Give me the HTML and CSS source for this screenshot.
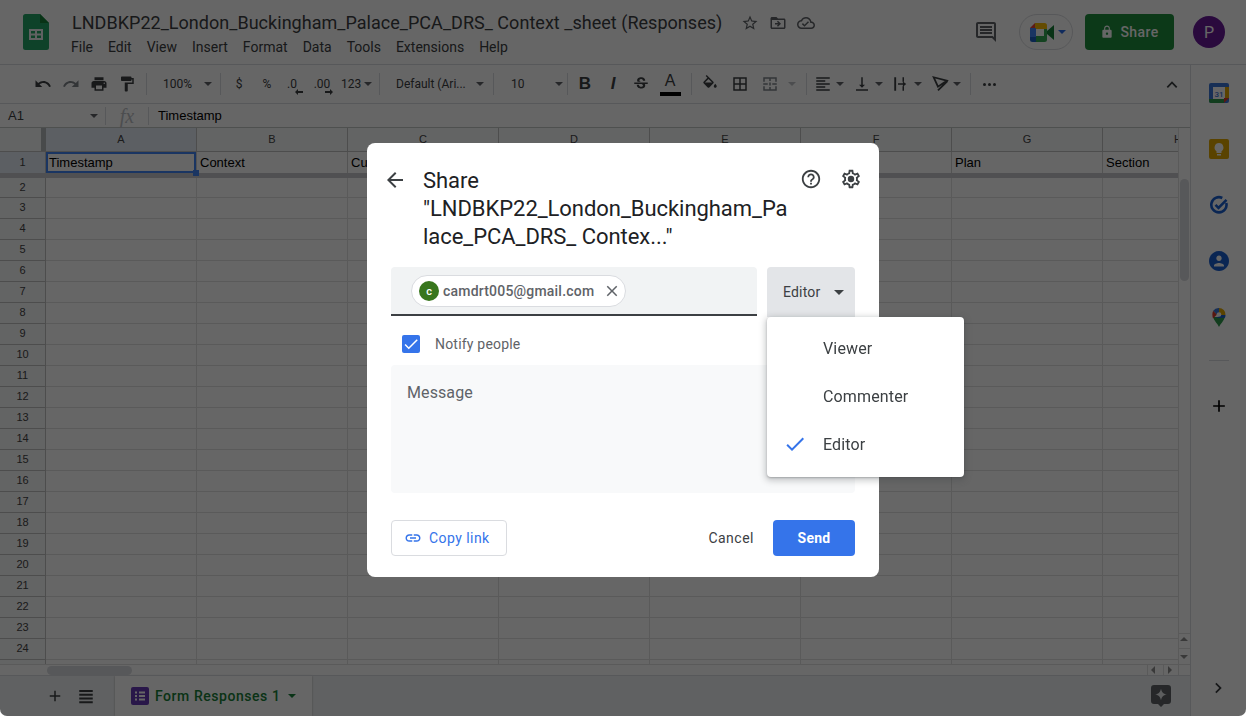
FILE: index.html
```html
<!DOCTYPE html>
<html lang="en">
<head>
    <meta charset="UTF-8">
    <title>Share sheet</title>
    <link rel="stylesheet" href="styles.css">
</head>
<body>
<div class="app">

    <header class="topbar">
        <svg class="logo" viewBox="0 0 26 36"><path fill="#23a566" d="M2.500 0H17l9 9v24.500a2.500 2.500 0 0 1-2.500 2.500h-21A2.500 2.500 0 0 1 0 33.500V2.500A2.500 2.500 0 0 1 2.500 0z"/><path fill="#188038" d="M17 0l9 9h-9z"/><path fill="#f1f3f4" d="M6 15h14v11H6zm2 2v2.500h4V17zm6 0v2.500h4V17zM8 21.500V24h4v-2.500zm6 0V24h4v-2.500z" fill-rule="evenodd"/></svg>
        <div class="doc">
            <div class="doc-title">
                <span class="doc-name">LNDBKP22_London_Buckingham_Palace_PCA_DRS_ Context _sheet (Responses)</span>
                <svg class="doc-icon" viewBox="0 0 24 24"><path d="M22 9.240l-7.190-.62L12 2 9.190 8.630 2 9.240l5.460 4.730L5.820 21 12 17.270 18.180 21l-1.630-7.030L22 9.240zM12 15.400l-3.760 2.270 1-4.280-3.320-2.880 4.380-.38L12 6.100l1.710 4.040 4.380.38-3.320 2.880 1 4.280L12 15.400z"/></svg>
                <svg class="doc-icon" viewBox="0 0 24 24"><path d="M20 6h-8l-2-2H4c-1.100 0-1.990.9-1.990 2L2 18c0 1.100.9 2 2 2h16c1.100 0 2-.9 2-2V8c0-1.100-.9-2-2-2zm0 12H4V8h16v10zm-8.010-9l-1.410 1.410L12.160 12H8v2h4.160l-1.590 1.590L11.990 17 16 13.010 11.990 9z"/></svg>
                <svg class="doc-icon" viewBox="0 0 24 24"><path d="M19.350 10.040C18.670 6.590 15.640 4 12 4 9.110 4 6.600 5.640 5.350 8.040 2.340 8.360 0 10.910 0 14c0 3.310 2.690 6 6 6h13c2.760 0 5-2.240 5-5 0-2.640-2.050-4.780-4.650-4.960zM19 18H6c-2.210 0-4-1.790-4-4 0-2.050 1.530-3.760 3.560-3.970l1.070-.11.5-.95C8.080 7.140 9.940 6 12 6c2.620 0 4.880 1.860 5.390 4.430l.3 1.500 1.530.11c1.560.1 2.780 1.410 2.780 2.960 0 1.650-1.350 3-3 3zm-9-3.820l-2.090-2.090L6.500 13.500 10 17l6.010-6.010-1.410-1.410z"/></svg>
            </div>
            <nav class="menubar">
                <span>File</span><span>Edit</span><span>View</span><span>Insert</span><span>Format</span><span>Data</span><span>Tools</span><span>Extensions</span><span>Help</span>
            </nav>
        </div>
        <div class="top-actions">
            <svg class="comment-icon" viewBox="0 0 24 24"><path d="M21.990 4c0-1.100-.89-2-1.990-2H4c-1.100 0-2 .9-2 2v12c0 1.100.9 2 2 2h14l4 4-.01-18zM20 4v13.170L18.830 16H4V4h16zM6 12h12v2H6zm0-3h12v2H6zm0-3h12v2H6z"/></svg>
            <div class="meet">
                <svg class="meet-logo" viewBox="0 0 24 19"><path fill="#ea4335" d="M0 5l5-5v5z"/><path fill="#fbbc04" d="M5 0h9.500A2.500 2.500 0 0 1 17 2.500V6H5z"/><path fill="#4285f4" d="M0 5h6v9H0z"/><path fill="#1a5fc4" d="M0 14h6v5H2.500A2.500 2.500 0 0 1 0 16.500z"/><path fill="#34a853" d="M6 13h8V6h3v10.500a2.500 2.500 0 0 1-2.500 2.500H6z"/><path fill="#188038" d="M17 8l7-6v15l-7-6z"/></svg>
                <span class="caret caret-blue"></span>
            </div>
            <button class="share-btn">
                <svg viewBox="0 0 24 24"><path d="M18 8h-1V6c0-2.760-2.240-5-5-5S7 3.240 7 6v2H6c-1.100 0-2 .9-2 2v10c0 1.100.9 2 2 2h12c1.100 0 2-.9 2-2V10c0-1.100-.9-2-2-2zm-6 9c-1.100 0-2-.9-2-2s.9-2 2-2 2 .9 2 2-.9 2-2 2zM9 8V6c0-1.660 1.340-3 3-3s3 1.340 3 3v2H9z"/></svg>
                Share
            </button>
            <div class="avatar">P</div>
        </div>
    </header>

    <div class="workspace">
        <main class="sheet">
            <div class="toolbar">
                <div class="tgroup g-history">
                    <svg class="tool" viewBox="0 0 24 24"><path d="M12.500 8c-2.650 0-5.050.99-6.900 2.600L2 7v9h9l-3.620-3.620c1.390-1.160 3.160-1.880 5.120-1.880 3.540 0 6.550 2.310 7.600 5.500l2.370-.78C21.080 11.030 17.150 8 12.500 8z"/></svg>
                    <svg class="tool tool-soft" viewBox="0 0 24 24"><path d="M18.400 10.600C16.550 8.990 14.150 8 11.500 8c-4.650 0-8.580 3.030-9.960 7.220L3.900 16c1.050-3.190 4.050-5.500 7.600-5.500 1.950 0 3.730.72 5.120 1.880L13 16h9V7l-3.600 3.600z"/></svg>
                    <svg class="tool" viewBox="0 0 24 24"><path d="M19 8H5c-1.660 0-3 1.340-3 3v6h4v4h12v-4h4v-6c0-1.660-1.340-3-3-3zm-3 11H8v-5h8v5zm3-7c-.55 0-1-.45-1-1s.45-1 1-1 1 .45 1 1-.45 1-1 1zm-1-9H6v4h12V3z"/></svg>
                    <svg class="tool" viewBox="0 0 24 24"><path d="M18 4V3c0-.55-.45-1-1-1H5c-.55 0-1 .45-1 1v4c0 .55.45 1 1 1h12c.55 0 1-.45 1-1V6h1v4H9v11c0 .55.45 1 1 1h2c.55 0 1-.45 1-1v-9h8V4h-3z"/></svg>
                </div>
                <div class="tgroup g-zoom"><span class="tlabel">100%</span><span class="caret"></span></div>
                <div class="tgroup g-number">
                    <span class="tnum">$</span>
                    <span class="tnum">%</span>
                    <span class="tnum tnum-less">.0<svg class="dec-arrow" viewBox="0 0 8 6"><path d="M3 0v2h5v2H3v2L0 3z"/></svg></span>
                    <span class="tnum tnum-plus">.00<svg class="dec-arrow" viewBox="0 0 8 6"><path d="M5 0v2H0v2h5v2l3-3z"/></svg></span>
                    <span class="tnum tnum-more">123<span class="caret"></span></span>
                </div>
                <div class="tgroup g-font"><span class="tlabel">Default (Ari...</span><span class="caret"></span></div>
                <div class="tgroup g-size"><span class="tlabel">10</span><span class="caret"></span></div>
                <div class="tgroup g-format">
                    <span class="tfmt tfmt-b">B</span>
                    <span class="tfmt tfmt-i">I</span>
                    <svg class="tool" viewBox="0 0 24 24"><path d="M7.240 8.750c-.26-.48-.39-1.030-.39-1.670 0-.61.13-1.160.4-1.670.26-.5.63-.93 1.110-1.290.48-.35 1.050-.63 1.700-.83.66-.19 1.390-.29 2.180-.29.81 0 1.540.11 2.210.34.66.22 1.230.54 1.690.94.47.4.83.88 1.080 1.430.25.55.38 1.150.38 1.810h-3.010c0-.31-.05-.59-.15-.85-.09-.27-.24-.49-.44-.68-.2-.19-.45-.33-.75-.44-.3-.1-.66-.16-1.060-.16-.39 0-.74.04-1.030.13-.29.09-.53.21-.72.36-.19.16-.34.34-.44.55-.1.21-.15.43-.15.66 0 .48.25.88.74 1.210.38.25.77.48 1.410.7H7.390c-.05-.08-.11-.17-.15-.25zM21 12v-2H3v2h9.620c.18.07.4.14.55.2.37.17.66.34.87.51.21.17.35.36.43.57.07.2.11.43.11.69 0 .23-.05.45-.14.66-.09.2-.23.38-.42.53-.19.15-.42.26-.71.35-.29.08-.63.13-1.010.13-.43 0-.83-.04-1.180-.13s-.66-.23-.91-.42c-.25-.19-.45-.44-.59-.75-.14-.31-.25-.76-.25-1.210H6.400c0 .55.08 1.130.24 1.580.16.45.37.85.65 1.210.28.35.6.66.98.92.37.26.78.48 1.220.65.44.17.9.3 1.380.39.48.08.96.13 1.440.13.8 0 1.530-.09 2.180-.28s1.210-.45 1.670-.79c.46-.34.82-.77 1.070-1.270s.38-1.070.38-1.710c0-.6-.1-1.140-.31-1.610-.05-.11-.11-.23-.17-.33H21z"/></svg>
                    <span class="tfmt tfmt-a">A</span>
                </div>
                <div class="tgroup g-cells">
                    <svg class="tool" viewBox="0 0 24 24"><path d="M16.560 8.940L7.620 0 6.210 1.410l2.380 2.380-5.150 5.150c-.59.59-.59 1.540 0 2.120l5.500 5.500c.29.29.68.44 1.060.44s.77-.15 1.060-.44l5.500-5.500c.59-.58.59-1.530 0-2.120zM5.210 10L10 5.210 14.790 10H5.210zM19 11.500s-2 2.170-2 3.500c0 1.100.9 2 2 2s2-.9 2-2c0-1.330-2-3.500-2-3.500z"/></svg>
                    <svg class="tool" viewBox="0 0 24 24"><path d="M3 3v18h18V3H3zm8 16H5v-6h6v6zm0-8H5V5h6v6zm8 8h-6v-6h6v6zm0-8h-6V5h6v6z"/></svg>
                    <svg class="tool tool-soft" viewBox="0 0 24 24"><path d="M3 3h18v2H3zM3 19h18v2H3zM3 5h2v4H3zM19 5h2v4h-2zM3 15h2v4H3zM19 15h2v4h-2zM3 11h6v2H3zM15 11h6v2h-6zM11 5h2v3h-2zM11 16h2v3h-2zM11 10h2v4h-2z"/></svg>
                    <span class="caret caret-soft"></span>
                </div>
                <div class="tgroup g-align">
                    <svg class="tool" viewBox="0 0 24 24"><path d="M15 15H3v2h12v-2zm0-8H3v2h12V7zM3 13h18v-2H3v2zm0 8h18v-2H3v2zM3 3v2h18V3H3z"/></svg><span class="caret"></span>
                    <svg class="tool" viewBox="0 0 24 24"><path d="M16 13h-3V3h-2v10H8l4 4 4-4zM4 19v2h16v-2H4z"/></svg><span class="caret"></span>
                    <svg class="tool" viewBox="0 0 24 24"><path d="M3 3h2.500v18H3zM14 3h2v6h-2zM14 15h2v6h-2zM8 11h6.500V8.500L19 12l-4.500 3.500V13H8z"/></svg><span class="caret"></span>
                    <svg class="tool tool-line" viewBox="0 0 24 24"><path d="M3.600 3L21 7.600 9.300 15.600zM9.300 20.500L22 8"/></svg><span class="caret"></span>
                </div>
                <div class="more-dots"><i></i><i></i><i></i></div>
                <svg class="collapse" viewBox="0 0 24 24"><path d="M12 8l-8 8 1.900 1.900L12 11.800l6.100 6.100L20 16z"/></svg>
            </div>

            <div class="formula">
                <span class="name-box">A1</span>
                <span class="caret"></span>
                <span class="fx">fx</span>
                <span class="formula-text">Timestamp</span>
            </div>

            <div class="grid">
                <div class="row row-head">
                    <div class="corner"></div>
                    <div class="cell col-label col-active">A</div>
                    <div class="cell col-label">B</div>
                    <div class="cell col-label">C</div>
                    <div class="cell col-label">D</div>
                    <div class="cell col-label">E</div>
                    <div class="cell col-label">F</div>
                    <div class="cell col-label">G</div>
                    <div class="cell col-label col-cut">H</div>
                </div>
                <div class="row row-first">
                    <div class="num num-active">1</div>
                    <div class="cell cell-selected">Timestamp<span class="fill-handle"></span></div>
                    <div class="cell">Context</div>
                    <div class="cell">Current</div>
                    <div class="cell"></div>
                    <div class="cell"></div>
                    <div class="cell"></div>
                    <div class="cell">Plan</div>
                    <div class="cell cell-last">Section</div>
                </div>
                <div class="freeze"></div>
                <div class="body">
                    <div class="row row-plain"><div class="num">2</div></div>
                    <div class="row row-plain"><div class="num">3</div></div>
                    <div class="row row-plain"><div class="num">4</div></div>
                    <div class="row row-plain"><div class="num">5</div></div>
                    <div class="row row-plain"><div class="num">6</div></div>
                    <div class="row row-plain"><div class="num">7</div></div>
                    <div class="row row-plain"><div class="num">8</div></div>
                    <div class="row row-plain"><div class="num">9</div></div>
                    <div class="row row-plain"><div class="num">10</div></div>
                    <div class="row row-plain"><div class="num">11</div></div>
                    <div class="row row-plain"><div class="num">12</div></div>
                    <div class="row row-plain"><div class="num">13</div></div>
                    <div class="row row-plain"><div class="num">14</div></div>
                    <div class="row row-plain"><div class="num">15</div></div>
                    <div class="row row-plain"><div class="num">16</div></div>
                    <div class="row row-plain"><div class="num">17</div></div>
                    <div class="row row-plain"><div class="num">18</div></div>
                    <div class="row row-plain"><div class="num">19</div></div>
                    <div class="row row-plain"><div class="num">20</div></div>
                    <div class="row row-plain"><div class="num">21</div></div>
                    <div class="row row-plain"><div class="num">22</div></div>
                    <div class="row row-plain"><div class="num">23</div></div>
                    <div class="row row-plain"><div class="num">24</div></div>
                    <div class="row-tail"><div class="num"></div></div>
                </div>
                <div class="vscroll">
                    <div class="vthumb"></div>
                    <div class="varrows"><span class="tri tri-up"></span><span class="tri tri-down"></span></div>
                </div>
                <div class="hscroll">
                    <div class="hthumb"></div>
                    <div class="harrows"><span class="tri tri-left"></span><span class="tri tri-right"></span><span class="hcorner"></span></div>
                </div>
            </div>

            <footer class="tabs">
                <svg class="tabs-icon" viewBox="0 0 24 24"><path d="M19 13h-6v6h-2v-6H5v-2h6V5h2v6h6z"/></svg>
                <svg class="tabs-icon" viewBox="0 0 24 24"><path d="M3 4h18v2.500H3zM3 9h18v2.500H3zM3 14h18v2.500H3zM3 19h18v2.500H3z"/></svg>
                <div class="tab">
                    <svg class="form-icon" viewBox="0 0 18 18"><rect width="18" height="18" rx="2" fill="#673ab7"/><path fill="#fff" d="M4 4.500h2v2H4zM8 4.500h6v2H8zM4 8h2v2H4zM8 8h6v2H8zM4 11.500h2v2H4zM8 11.500h6v2H8z"/></svg>
                    <span class="tab-name">Form Responses 1</span>
                    <span class="caret caret-green"></span>
                </div>
                <div class="explore">
                    <svg viewBox="0 0 20 22"><path fill="#5f6368" d="M3 0h14a3 3 0 0 1 3 3v13a3 3 0 0 1-3 3h-4l-3 3-3-3H3a3 3 0 0 1-3-3V3a3 3 0 0 1 3-3z"/><path fill="#e8eaed" d="M10 3.500c.6 3.400 2 5.200 5.800 6-3.800.8-5.200 2.600-5.800 6-.6-3.400-2-5.200-5.800-6 3.800-.8 5.200-2.600 5.800-6z"/></svg>
                </div>
            </footer>
        </main>

        <aside class="sidepanel">
            <svg class="side-icon" viewBox="0 0 20 20"><rect width="20" height="20" rx="2" fill="#3a75d8"/><rect x="4" y="4" width="12" height="12" fill="#fff"/><path fill="#e0a800" d="M16 4h4v11h-4z"/><path fill="#2e9a4c" d="M0 16h15v4H2a2 2 0 0 1-2-2z"/><path fill="#d93a2c" d="M15 15h5l-5 5z"/><text class="cal-day" x="10" y="13.500">31</text></svg>
            <svg class="side-icon" viewBox="0 0 20 20"><rect width="20" height="20" rx="2" fill="#e0a800"/><path fill="#fff" d="M10 4a4.500 4.500 0 0 0-2.500 8.200V14h5v-1.800A4.500 4.500 0 0 0 10 4zM8 15h4v1.500H8z"/></svg>
            <svg class="side-icon" viewBox="0 0 20 20"><path fill="none" stroke="#1a5fd0" stroke-width="2.600" d="M17.300 8a7.600 7.600 0 1 1-4-5"/><path fill="none" stroke="#1a5fd0" stroke-width="2.600" d="M6.500 9.800l3 3 8-8"/></svg>
            <svg class="side-icon" viewBox="2 2 20 20"><path fill="#1a5fd0" d="M12 2C6.480 2 2 6.480 2 12s4.480 10 10 10 10-4.480 10-10S17.520 2 12 2z"/><path fill="#fff" d="M12 6.500c1.500 0 2.700 1.200 2.700 2.700s-1.200 2.700-2.700 2.700-2.700-1.200-2.700-2.700 1.200-2.700 2.700-2.700zm0 7.500c2 0 5 1 5 2.500v1H7v-1c0-1.500 3-2.500 5-2.500z"/></svg>
            <svg class="side-icon" viewBox="0 0 20 20"><path fill="#2e9a4c" d="M10 20c-1-3-5-6-6-10h12c-1 4-5 7-6 10z"/><path fill="#d93a2c" d="M4.200 3.800L8 7.500 4 11.500C3.200 9 3 6 4.200 3.800z"/><path fill="#3a75d8" d="M4.200 3.800A6.500 6.500 0 0 1 10 1v4.500L8 7.500z"/><path fill="#e0a800" d="M10 1a6.500 6.500 0 0 1 6.500 7L12 8.500l-2-3z"/><path fill="#1a5fd0" d="M16.500 8c0 1-.2 1.800-.6 2.700L7 11l5-3z"/><circle cx="10" cy="7.500" r="2.300" fill="#fff"/></svg>
            <div class="side-rule"></div>
            <svg class="side-plus" viewBox="0 0 24 24"><path d="M19 13h-6v6h-2v-6H5v-2h6V5h2v6h6z"/></svg>
            <svg class="side-expand" viewBox="0 0 24 24"><path d="M8.600 5L7 6.800 12.300 12 7 17.200 8.600 19l7-7z"/></svg>
        </aside>
    </div>
</div>

<div class="scrim"></div>

<div class="dialog">
    <div class="dialog-head">
        <svg class="back" viewBox="0 0 24 24"><path d="M20 11H7.830l5.590-5.590L12 4l-8 8 8 8 1.410-1.410L7.830 13H20v-2z"/></svg>
        <h2 class="dialog-title">Share<br>"LNDBKP22_London_Buckingham_Pa<br>lace_PCA_DRS_ Contex..."</h2>
        <div class="head-icons">
            <svg viewBox="0 0 24 24"><path d="M11 18h2v-2h-2v2zm1-16C6.480 2 2 6.480 2 12s4.480 10 10 10 10-4.480 10-10S17.520 2 12 2zm0 18c-4.410 0-8-3.590-8-8s3.590-8 8-8 8 3.590 8 8-3.590 8-8 8zm0-14c-2.210 0-4 1.790-4 4h2c0-1.100.9-2 2-2s2 .9 2 2c0 2-3 1.750-3 5h2c0-2.250 3-2.500 3-5 0-2.210-1.790-4-4-4z"/></svg>
            <svg viewBox="0 0 24 24"><path d="M19.430 12.980c.04-.32.07-.64.07-.98 0-.34-.03-.66-.07-.98l2.110-1.650c.19-.15.24-.42.12-.64l-2-3.460c-.09-.16-.26-.25-.44-.25-.06 0-.12.01-.17.03l-2.490 1c-.52-.4-1.080-.73-1.690-.98l-.38-2.650C14.460 2.180 14.250 2 14 2h-4c-.25 0-.46.18-.49.42l-.38 2.650c-.61.25-1.170.59-1.690.98l-2.490-1c-.06-.02-.12-.03-.18-.03-.17 0-.34.09-.43.25l-2 3.460c-.13.22-.07.49.12.64l2.110 1.650c-.04.32-.07.65-.07.98 0 .33.03.66.07.98l-2.110 1.650c-.19.15-.24.42-.12.64l2 3.460c.09.16.26.25.44.25.06 0 .12-.01.17-.03l2.490-1c.52.4 1.080.73 1.690.98l.38 2.650c.03.24.24.42.49.42h4c.25 0 .46-.18.49-.42l.38-2.650c.61-.25 1.170-.59 1.690-.98l2.490 1c.06.02.12.03.18.03.17 0 .34-.09.43-.25l2-3.460c.12-.22.07-.49-.12-.64l-2.110-1.650zm-1.980-1.710c.04.31.05.52.05.73 0 .21-.02.43-.05.73l-.14 1.130.89.7 1.080.84-.7 1.210-1.270-.51-1.040-.42-.9.68c-.43.32-.84.56-1.250.73l-1.060.43-.16 1.130-.2 1.350h-1.400l-.19-1.350-.16-1.130-1.060-.43c-.43-.18-.83-.41-1.230-.71l-.91-.7-1.060.43-1.270.51-.7-1.210 1.080-.84.89-.7-.14-1.130c-.03-.31-.05-.54-.05-.74s.02-.43.05-.73l.14-1.130-.89-.7-1.080-.84.7-1.210 1.270.51 1.040.42.9-.68c.43-.32.84-.56 1.250-.73l1.060-.43.16-1.130.2-1.350h1.390l.19 1.350.16 1.130 1.060.43c.43.18.83.41 1.230.71l.91.7 1.060-.43 1.270-.51.7 1.210-1.070.85-.89.7.14 1.130zM12 8.500a3.500 3.500 0 1 0 0 7 3.500 3.500 0 0 0 0-7z"/></svg>
        </div>
    </div>

    <div class="recipient-row">
        <div class="recipient">
            <div class="chip">
                <span class="chip-avatar">c</span>
                <span class="chip-text">camdrt005@gmail.com</span>
                <svg class="chip-close" viewBox="0 0 24 24"><path d="M19 6.410L17.590 5 12 10.590 6.410 5 5 6.410 10.590 12 5 17.590 6.410 19 12 13.410 17.590 19 19 17.590 13.410 12z"/></svg>
            </div>
        </div>
        <div class="role">Editor<span class="caret caret-dark"></span></div>
    </div>

    <div class="notify">
        <span class="checkbox">
            <svg viewBox="0 0 24 24"><path d="M9 16.170L4.830 12l-1.420 1.410L9 19 21 7l-1.410-1.410z"/></svg>
        </span>
        <span class="notify-label">Notify people</span>
    </div>

    <div class="message">Message</div>

    <div class="dialog-foot">
        <button class="copy-link">
            <svg viewBox="0 0 24 24"><path d="M3.900 12c0-1.710 1.390-3.100 3.100-3.100h4V7H7c-2.760 0-5 2.240-5 5s2.240 5 5 5h4v-1.900H7c-1.710 0-3.100-1.390-3.100-3.100zM8 13h8v-2H8v2zm9-6h-4v1.900h4c1.710 0 3.100 1.390 3.100 3.100s-1.390 3.100-3.100 3.100h-4V17h4c2.760 0 5-2.240 5-5s-2.240-5-5-5z"/></svg>
            Copy link
        </button>
        <button class="cancel">Cancel</button>
        <button class="send">Send</button>
    </div>
</div>

<div class="role-menu">
    <div class="role-item">Viewer</div>
    <div class="role-item">Commenter</div>
    <div class="role-item role-checked">
        <svg viewBox="0 0 24 24"><path d="M9 16.170L4.830 12l-1.420 1.410L9 19 21 7l-1.410-1.410z"/></svg>
        Editor
    </div>
</div>

</body>
</html>
```

FILE: styles.css
```css
* {
    box-sizing: border-box;
}
html, body {
    margin: 0;
    height: 716px;
    overflow: hidden;
    background: #fff;
}
body {
    font-family: Roboto, "Liberation Sans", sans-serif;
    color: #3c4043;
}
button {
    font-family: inherit;
    border: none;
    background: none;
    padding: 0;
}
.app {
    height: 716px;
    display: flex;
    flex-direction: column;
    background: #fff;
    border-radius: 0 0 7px 7px;
    overflow: hidden;
}

/* top bar */
.topbar {
    height: 65px;
    flex: none;
    display: flex;
    border-bottom: 1px solid #dadce0;
    padding-left: 23px;
}
.logo {
    width: 26px;
    height: 36px;
    margin-top: 14px;
    flex: none;
}
.doc {
    margin-left: 23px;
    padding-top: 11px;
}
.doc-title {
    display: flex;
    align-items: center;
    height: 23px;
}
.doc-name {
    font-size: 18px;
    letter-spacing: 0.03px;
    color: #3c4043;
    white-space: nowrap;
    width: 669px;
}
.doc-icon {
    width: 18px;
    height: 18px;
    fill: #5f6368;
    margin-right: 10px;
    flex: none;
}
.menubar {
    display: flex;
    gap: 15px;
    margin-top: 3px;
    font-size: 14px;
    line-height: 20px;
    margin-left: -1px;
}
.top-actions {
    margin-left: auto;
    display: flex;
    align-items: center;
    height: 64px;
    padding-right: 21px;
}
.comment-icon {
    width: 24px;
    height: 24px;
    fill: #5f6368;
}
.meet {
    width: 54px;
    height: 36px;
    margin-left: 21px;
    border: 1px solid #dadce0;
    border-radius: 18px;
    display: flex;
    align-items: center;
    padding-left: 10px;
    gap: 4px;
}
.meet-logo {
    width: 24px;
    height: 19px;
}
.share-btn {
    width: 89px;
    height: 36px;
    margin-left: 12px;
    border-radius: 4px;
    background: #1e8e3e;
    color: #fff;
    font-size: 14px;
    font-weight: 500;
    letter-spacing: 0.4px;
    display: flex;
    align-items: center;
    justify-content: center;
    gap: 6px;
}
.share-btn svg {
    width: 14px;
    height: 14px;
    fill: #fff;
}
.avatar {
    width: 32px;
    height: 32px;
    margin-left: 19px;
    border-radius: 50%;
    background: #6a1b9a;
    color: #fff;
    font-size: 16px;
    display: flex;
    align-items: center;
    justify-content: center;
}

/* carets */
.caret {
    display: inline-block;
    width: 0;
    height: 0;
    border-left: 4px solid transparent;
    border-right: 4px solid transparent;
    border-top: 4px solid #5f6368;
    flex: none;
}
.caret-blue {
    border-top-color: #2a6ce8;
}
.caret-soft {
    border-top-color: #bdc1c6;
}
.caret-green {
    border-top-color: #188038;
}
.caret-dark {
    border-left-width: 5px;
    border-right-width: 5px;
    border-top-width: 5px;
    border-top-color: #3c4043;
}

.workspace {
    flex: 1;
    min-height: 0;
    display: flex;
}
.sheet {
    width: 1190px;
    flex: none;
    display: flex;
    flex-direction: column;
}

/* toolbar */
.toolbar {
    height: 39px;
    flex: none;
    display: flex;
    align-items: center;
    border-bottom: 1px solid #dadce0;
    font-size: 12px;
    position: relative;
}
.tgroup {
    display: flex;
    align-items: center;
    height: 22px;
    flex: none;
    border-right: 1px solid #dadce0;
}
.g-history {
    width: 147px;
    padding-left: 34px;
    gap: 10px;
}
.g-zoom {
    width: 74px;
    padding-left: 16px;
}
.g-zoom .caret {
    margin-left: 12px;
}
.g-number {
    width: 159px;
}
.g-font {
    width: 114px;
    padding-left: 16px;
}
.g-font .caret {
    margin-left: 10px;
}
.g-size {
    width: 74px;
    padding-left: 17px;
}
.g-size .caret {
    margin-left: 30px;
}
.g-format {
    width: 124px;
    padding-left: 3px;
}
.g-cells {
    width: 115px;
    padding-left: 9px;
    gap: 12px;
}
.g-cells .caret {
    margin-left: -3px;
}
.g-align {
    width: 164px;
    padding-left: 7px;
}
.g-align .caret {
    margin: 0 9px 0 4px;
}
.tool {
    width: 18px;
    height: 18px;
    fill: #3c4043;
    flex: none;
}
.tool-soft {
    fill: #80868b;
}
.tool-line {
    fill: none;
    stroke: #3c4043;
    stroke-width: 2.4;
}
.g-format .tool {
    margin: 0 5px;
}
.tlabel {
    color: #3c4043;
    white-space: nowrap;
}
.tnum {
    width: 28px;
    text-align: center;
    font-size: 12px;
    position: relative;
    flex: none;
}
.tnum:first-child {
    margin-left: 4px;
}
.tnum-less {
    width: 22px;
}
.tnum-plus {
    width: 38px;
}
.tnum-more {
    width: 38px;
    display: flex;
    align-items: center;
    gap: 3px;
}
.dec-arrow {
    position: absolute;
    top: 12px;
    width: 8px;
    height: 6px;
    fill: #3c4043;
}
.tnum-less .dec-arrow {
    left: 14px;
}
.tnum-plus .dec-arrow {
    left: 22px;
}
.tfmt {
    width: 28px;
    text-align: center;
    font-size: 17px;
    flex: none;
    position: relative;
}
.tfmt-b {
    font-weight: 700;
    font-family: "Liberation Sans", sans-serif;
}
.tfmt-i {
    font-style: italic;
    font-family: "Liberation Sans", sans-serif;
    font-weight: 700;
}
.tfmt-a {
    font-size: 16px;
    margin-left: 1px;
    line-height: 16px;
    height: 24px;
    font-family: "Liberation Sans", sans-serif;
    padding-top: 1px;
}
.tfmt-a::after {
    content: "";
    position: absolute;
    left: 4px;
    right: 3px;
    bottom: 0;
    height: 4px;
    background: #000;
}
.more-dots {
    display: flex;
    gap: 2px;
    margin-left: 12px;
}
.more-dots i {
    width: 3px;
    height: 3px;
    border-radius: 50%;
    background: #3c4043;
}
.collapse {
    width: 16px;
    height: 16px;
    fill: #3c4043;
    margin-left: auto;
    margin-right: 10px;
}

/* formula bar */
.formula {
    height: 24px;
    flex: none;
    display: flex;
    align-items: center;
    border-bottom: 1px solid #c4c7c5;
    font-size: 13px;
    font-family: "Liberation Sans", sans-serif;
    color: #000;
    padding-left: 8px;
}
.name-box {
    width: 82px;
    color: #3c4043;
}
.fx {
    width: 44px;
    margin-left: 7px;
    border-left: 1px solid #dadce0;
    border-right: 1px solid #dadce0;
    height: 18px;
    line-height: 18px;
    text-align: center;
    font-family: "Liberation Serif", serif;
    font-style: italic;
    font-size: 20px;
    color: #bdc1c6;
}
.formula-text {
    margin-left: 9px;
}

/* grid */
.grid {
    flex: 1;
    min-height: 0;
    display: grid;
    grid-template-columns: 1178px 12px;
    grid-template-rows: 24px 21px 5px 1fr 12px;
    font-family: "Liberation Sans", sans-serif;
    position: relative;
}
.row {
    display: flex;
    grid-column: 1;
}
.row-head {
    background: #f8f9fa;
    border-bottom: 1px solid #c0c0c0;
    height: 24px;
}
.corner {
    width: 46px;
    flex: none;
    border-right: 5px solid #b5b8bb;
}
.cell {
    width: 151px;
    flex: none;
    border-right: 1px solid #d0d0d0;
    font-size: 13px;
    padding-left: 3px;
    line-height: 21px;
    color: #000;
    white-space: nowrap;
    overflow: hidden;
}
.col-label {
    font-size: 11px;
    line-height: 23px;
    color: #444;
    text-align: center;
    padding: 0;
    border-right-color: #c0c0c0;
}
.col-active {
    background: #e6eef8;
}
.col-cut {
    width: 75px;
    text-align: left;
    padding-left: 71px;
    border-right: none;
}
.row-first {
    height: 21px;
    position: relative;
}
.num {
    width: 46px;
    flex: none;
    background: #f8f9fa;
    border-right: 1px solid #c0c0c0;
    text-align: center;
    font-size: 11px;
    color: #444;
}
.num-active {
    background: #e6eef8;
    line-height: 21px;
}
.cell-selected {
    box-shadow: inset 0 0 0 2px #4285f4;
    overflow: visible;
    position: relative;
}
.cell-last {
    width: 75px;
    border-right: none;
}
.fill-handle {
    position: absolute;
    right: -3px;
    bottom: -3px;
    width: 6px;
    height: 6px;
    background: #4285f4;
}
.freeze {
    grid-column: 1;
    background: #c8c9cc;
}
.body {
    grid-column: 1;
    display: flex;
    flex-direction: column;
    background: repeating-linear-gradient(90deg, transparent 0, transparent 150px, #e0e0e0 150px, #e0e0e0 151px) 46px 0 no-repeat;
    overflow: hidden;
}
.row-plain {
    height: 21px;
    flex: none;
    border-bottom: 1px solid #e0e0e0;
}
.row-plain:first-child {
    height: 20px;
}
.row-plain .num {
    line-height: 19px;
    border-bottom: 1px solid #c0c0c0;
    margin-bottom: -1px;
}
.row-tail {
    flex: 1;
    display: flex;
}
.vscroll {
    grid-column: 2;
    grid-row: 1 / 5;
    border-left: 1px solid #e0e0e0;
    background: #fff;
    display: flex;
    flex-direction: column;
    position: relative;
}
.vthumb {
    width: 9px;
    height: 102px;
    margin: 51px 0 0 1px;
    border-radius: 5px;
    background: #dadce0;
}
.varrows {
    margin-top: auto;
    height: 31px;
    border-top: 1px solid #e0e0e0;
    background: linear-gradient(#e0e0e0, #e0e0e0) 0 14px / 100% 1px no-repeat;
    display: flex;
    flex-direction: column;
}
.tri {
    width: 0;
    height: 0;
    display: block;
    border: 4px solid transparent;
}
.tri-up {
    border-bottom: 4px solid #909090;
    border-top: none;
    margin: 3px 0 14px 1px;
}
.tri-down {
    border-top: 4px solid #909090;
    border-bottom: none;
    margin: 0 0 0 1px;
}
.tri-left {
    border-right: 4px solid #909090;
    border-left: none;
}
.tri-right {
    border-left: 4px solid #909090;
    border-right: none;
}
.hscroll {
    grid-column: 1 / 3;
    display: flex;
    align-items: center;
    padding-left: 47px;
    border-top: 1px solid #e0e0e0;
    border-bottom: 1px solid #dadce0;
}
.hthumb {
    width: 85px;
    height: 9px;
    border-radius: 5px;
    background: #dadce0;
}
.harrows {
    margin-left: auto;
    display: flex;
    align-items: center;
    height: 100%;
    border-left: 1px solid #e0e0e0;
    padding-left: 3px;
    background: linear-gradient(#e0e0e0, #e0e0e0) 15px 0 / 1px 100% no-repeat;
}
.harrows .tri-left {
    margin-right: 13px;
}
.harrows .tri-right {
    margin-right: 6px;
}
.hcorner {
    width: 12px;
    height: 100%;
    border-left: 1px solid #e0e0e0;
}

/* sheet tabs */
.tabs {
    height: 40px;
    flex: none;
    display: flex;
    align-items: center;
    background: #f1f3f4;
    padding-left: 46px;
}
.tabs-icon {
    width: 18px;
    height: 18px;
    fill: #3c4043;
    flex: none;
    margin-right: 13px;
}
.tab {
    height: 40px;
    width: 197px;
    margin-left: 7px;
    background: #fff;
    box-shadow: 0 0 2px rgba(0,0,0,.3);
    display: flex;
    align-items: center;
    padding-left: 16px;
}
.form-icon {
    width: 18px;
    height: 18px;
    flex: none;
}
.tab-name {
    margin-left: 6px;
    font-size: 14px;
    font-weight: 500;
    letter-spacing: 0.55px;
    color: #188038;
}
.tab .caret {
    margin-left: 8px;
}
.explore {
    margin-left: auto;
    margin-right: 19px;
    height: 22px;
}
.explore svg {
    width: 20px;
    height: 22px;
    display: block;
}

/* side panel */
.sidepanel {
    flex: 1;
    border-left: 1px solid #dadce0;
    display: flex;
    flex-direction: column;
    align-items: center;
    padding-top: 18px;
}
.side-icon {
    width: 20px;
    height: 20px;
    margin-bottom: 36px;
    flex: none;
}
.cal-day {
    font-family: Roboto, sans-serif;
    font-size: 8px;
    font-weight: 500;
    fill: #3a75d8;
    text-anchor: middle;
}
.side-rule {
    width: 20px;
    height: 1px;
    background: #dadce0;
    margin-top: -3px;
}
.side-plus {
    width: 20px;
    height: 20px;
    margin-top: 35px;
    fill: #000;
}
.side-expand {
    width: 18px;
    height: 18px;
    fill: #3c4043;
    margin-top: auto;
    margin-bottom: 19px;
}

/* overlay */
.scrim {
    position: fixed;
    inset: 0;
    background: rgba(0,0,0,.6);
    border-radius: 0 0 7px 7px;
}
.dialog {
    position: absolute;
    left: 367px;
    top: 143px;
    width: 512px;
    height: 434px;
    background: #fff;
    border-radius: 8px;
    padding: 24px 24px 21px;
    display: flex;
    flex-direction: column;
}
.dialog-head {
    display: flex;
    height: 84px;
}
.back {
    width: 24px;
    height: 24px;
    margin: 1px 16px 0 -8px;
    fill: #3c4043;
    flex: none;
}
.dialog-title {
    margin: 0;
    font-size: 22px;
    font-weight: 400;
    line-height: 28px;
    letter-spacing: -0.05px;
    color: #202124;
    white-space: nowrap;
}
.head-icons {
    margin-left: auto;
    margin-right: -7px;
    display: flex;
    gap: 18px;
    height: 22px;
    margin-top: 1px;
}
.head-icons svg {
    width: 22px;
    height: 22px;
    fill: #3c4043;
}
.recipient-row {
    display: flex;
    gap: 10px;
    margin-top: 16px;
    height: 50px;
    flex: none;
}
.recipient {
    width: 366px;
    height: 49px;
    background: #f1f3f4;
    border-bottom: 2px solid #3c4043;
    border-radius: 4px 4px 0 0;
    padding: 8px 0 0 20px;
}
.chip {
    display: inline-flex;
    align-items: center;
    height: 32px;
    width: 215px;
    background: #fff;
    border: 1px solid #dadce0;
    border-radius: 16px;
    padding-left: 7px;
}
.chip-avatar {
    width: 20px;
    height: 20px;
    border-radius: 50%;
    background: #38761d;
    color: #fff;
    font-size: 11px;
    font-weight: 500;
    display: flex;
    align-items: center;
    justify-content: center;
    flex: none;
}
.chip-text {
    margin-left: 4px;
    font-size: 14px;
    font-weight: 500;
    letter-spacing: 0.2px;
    color: #5f6368;
    white-space: nowrap;
    width: 160px;
}
.chip-close {
    width: 18px;
    height: 18px;
    fill: #5f6368;
    flex: none;
}
.role {
    width: 88px;
    height: 50px;
    background: #e3e5e8;
    border-radius: 4px 4px 0 0;
    display: flex;
    align-items: center;
    padding-left: 16px;
    font-size: 14px;
    letter-spacing: 0.2px;
    color: #3c4043;
    gap: 13px;
}
.notify {
    height: 48px;
    flex: none;
    display: flex;
    align-items: center;
    padding: 6px 0 0 11px;
    gap: 15px;
}
.checkbox {
    width: 18px;
    height: 18px;
    border-radius: 2px;
    background: #3574ea;
    display: flex;
    align-items: center;
    justify-content: center;
}
.checkbox svg {
    width: 18px;
    height: 18px;
    fill: #fff;
}
.notify-label {
    font-size: 14px;
    letter-spacing: 0.2px;
    color: #5f6368;
}
.message {
    height: 128px;
    flex: none;
    background: #f8f9fa;
    border-radius: 4px;
    padding: 18px 16px;
    font-size: 16px;
    line-height: 20px;
    letter-spacing: 0.1px;
    color: #5f6368;
}
.dialog-foot {
    display: flex;
    align-items: center;
    margin-top: 27px;
    height: 36px;
    flex: none;
}
.copy-link {
    width: 116px;
    height: 36px;
    border: 1px solid #dadce0;
    border-radius: 4px;
    display: flex;
    align-items: center;
    padding-left: 12px;
    gap: 7px;
    color: #3574ea;
    font-size: 14px;
    letter-spacing: 0.45px;
    background: #fff;
}
.copy-link svg {
    width: 18px;
    height: 18px;
    fill: #3574ea;
}
.cancel {
    margin-left: auto;
    margin-right: 19px;
    font-size: 14px;
    letter-spacing: 0.5px;
    color: #3c4043;
}
.send {
    width: 82px;
    height: 36px;
    border-radius: 4px;
    background: #3574ea;
    color: #fff;
    font-size: 14px;
    letter-spacing: 0.25px;
    font-weight: 700;
}
.role-menu {
    position: absolute;
    left: 767px;
    top: 317px;
    width: 197px;
    height: 160px;
    background: #fff;
    border-radius: 4px;
    padding: 7px 0;
    box-shadow: 0 2px 6px 2px rgba(60,64,67,.25), 0 1px 2px rgba(60,64,67,.3);
}
.role-item {
    height: 48px;
    display: flex;
    align-items: center;
    padding-left: 56px;
    font-size: 16px;
    letter-spacing: 0.15px;
    color: #3c4043;
    position: relative;
}
.role-item svg {
    position: absolute;
    left: 16px;
    width: 24px;
    height: 24px;
    fill: #3574ea;
}
```
